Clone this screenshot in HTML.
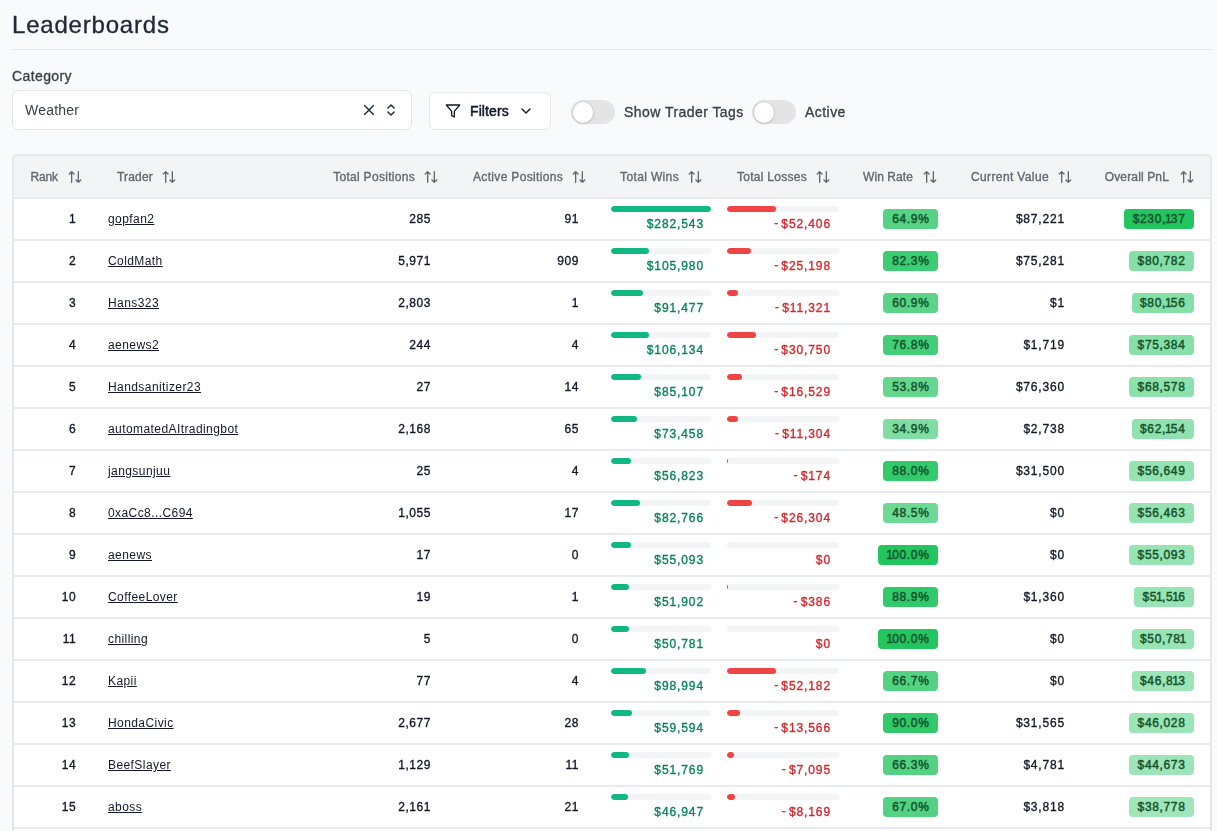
<!DOCTYPE html>
<html><head><meta charset="utf-8"><title>Leaderboards</title>
<style>
html,body{margin:0;padding:0;width:1217px;height:831px;overflow:hidden;background:#f9fafb;font-family:"Liberation Sans",sans-serif;}
.t{position:absolute;white-space:nowrap;will-change:transform;}
.a{position:absolute;box-sizing:border-box;}
svg{position:absolute;overflow:visible;}
.bd{position:absolute;height:20px;border-radius:4px;font-size:12px;line-height:20px;color:#14532d;white-space:nowrap;box-sizing:border-box;text-align:center;-webkit-text-stroke:0.4px #14532d;}
</style></head><body>
<div class="t" style="left:11.50px;top:7.58px;font-size:24px;line-height:34px;color:#1f2937;letter-spacing:0.8px;-webkit-text-stroke:0.35px #1f2937;">Leaderboards</div>
<div class="a" style="left:12px;top:49px;width:1200px;height:1px;background:#e4e5e9"></div>
<div class="t" style="left:12.30px;top:66.35px;font-size:14px;line-height:20px;-webkit-text-stroke:0.33px #3a3f47;color:#3a3f47;letter-spacing:0.4px;">Category</div>
<div class="a" style="left:12px;top:90px;width:400px;height:40px;background:#fff;border:1px solid #e5e7eb;border-radius:6px"></div>
<div class="t" style="left:25.30px;top:100.15px;font-size:14px;line-height:20px;color:#3a3f47;letter-spacing:0.2px;">Weather</div>
<svg style="left:364px;top:105px" width="10" height="10" viewBox="0 0 10 10"><path d="M0.6 0.6L9.4 9.4M9.4 0.6L0.6 9.4" stroke="#1f2937" stroke-width="1.4" fill="none" stroke-linecap="round"/></svg>
<svg style="left:387px;top:104px" width="8" height="12" viewBox="0 0 8 12"><path d="M0.9 4L4 0.9L7.1 4M0.9 8L4 11.1L7.1 8" stroke="#1f2937" stroke-width="1.4" fill="none" stroke-linecap="round" stroke-linejoin="round"/></svg>
<div class="a" style="left:429px;top:92px;width:122px;height:38px;background:#fff;border:1px solid #e5e7eb;border-radius:6px"></div>
<svg style="left:445px;top:103px" width="16" height="16" viewBox="0 0 24 24"><path d="M22 3H2l8 9.46V19l4 2v-8.54L22 3z" stroke="#111827" stroke-width="1.9" fill="none" stroke-linecap="round" stroke-linejoin="round"/></svg>
<div class="t" style="left:469.50px;top:101.35px;font-size:14px;line-height:20px;-webkit-text-stroke:0.5px #111827;color:#111827;letter-spacing:0.1px;">Filters</div>
<svg style="left:518px;top:103px" width="16" height="16" viewBox="0 0 24 24"><path d="m6 9 6 6 6-6" stroke="#111827" stroke-width="2" fill="none" stroke-linecap="round" stroke-linejoin="round"/></svg>
<div class="a" style="left:571px;top:100px;width:44px;height:24px;border-radius:12px;background:#e4e4e7"></div>
<div class="a" style="left:572.5px;top:102px;width:20.5px;height:20.5px;border-radius:50%;background:#fff;box-shadow:0 0 0 0.6px rgba(0,0,0,0.08),0 1px 3px rgba(0,0,0,0.15)"></div>
<div class="t" style="left:623.50px;top:102.15px;font-size:14px;line-height:20px;-webkit-text-stroke:0.33px #3a3f47;color:#3a3f47;letter-spacing:0.45px;">Show Trader Tags</div>
<div class="a" style="left:752px;top:100px;width:44px;height:24px;border-radius:12px;background:#e4e4e7"></div>
<div class="a" style="left:753.5px;top:102px;width:20.5px;height:20.5px;border-radius:50%;background:#fff;box-shadow:0 0 0 0.6px rgba(0,0,0,0.08),0 1px 3px rgba(0,0,0,0.15)"></div>
<div class="t" style="left:804.50px;top:102.15px;font-size:14px;line-height:20px;-webkit-text-stroke:0.33px #3a3f47;color:#3a3f47;letter-spacing:0.45px;">Active</div>
<div class="a" style="left:12px;top:154px;width:1200px;height:700px;background:#fff;border:2px solid #e6e7ea;border-radius:5px;overflow:hidden">
<div class="a" style="left:0;top:0;width:1196px;height:43px;background:#f3f4f6;border-bottom:2px solid #e9eaec"></div>
<div class="a" style="left:0;top:83px;width:1196px;height:2px;background:#e9eaec"></div>
<div class="a" style="left:0;top:125px;width:1196px;height:2px;background:#e9eaec"></div>
<div class="a" style="left:0;top:167px;width:1196px;height:2px;background:#e9eaec"></div>
<div class="a" style="left:0;top:209px;width:1196px;height:2px;background:#e9eaec"></div>
<div class="a" style="left:0;top:251px;width:1196px;height:2px;background:#e9eaec"></div>
<div class="a" style="left:0;top:293px;width:1196px;height:2px;background:#e9eaec"></div>
<div class="a" style="left:0;top:335px;width:1196px;height:2px;background:#e9eaec"></div>
<div class="a" style="left:0;top:377px;width:1196px;height:2px;background:#e9eaec"></div>
<div class="a" style="left:0;top:419px;width:1196px;height:2px;background:#e9eaec"></div>
<div class="a" style="left:0;top:461px;width:1196px;height:2px;background:#e9eaec"></div>
<div class="a" style="left:0;top:503px;width:1196px;height:2px;background:#e9eaec"></div>
<div class="a" style="left:0;top:545px;width:1196px;height:2px;background:#e9eaec"></div>
<div class="a" style="left:0;top:587px;width:1196px;height:2px;background:#e9eaec"></div>
<div class="a" style="left:0;top:629px;width:1196px;height:2px;background:#e9eaec"></div>
<div class="a" style="left:0;top:671px;width:1196px;height:2px;background:#e9eaec"></div>
</div>
<svg style="left:67px;top:169px" width="16" height="16" viewBox="0 0 24 24"><path d="m20.6 16.4-3.6 3.6-3.6-3.6M17 20V4M3.4 7.6 7 4l3.6 3.6M7 4v16" stroke="#62676f" stroke-width="2" fill="none" stroke-linecap="round" stroke-linejoin="round"/></svg>
<div class="t" style="left:-141.70px;width:200px;text-align:right;top:169.14px;font-size:12px;line-height:17px;-webkit-text-stroke:0.35px #62676f;color:#62676f;letter-spacing:-0.1px;">Rank</div>
<svg style="left:161px;top:169px" width="16" height="16" viewBox="0 0 24 24"><path d="m20.6 16.4-3.6 3.6-3.6-3.6M17 20V4M3.4 7.6 7 4l3.6 3.6M7 4v16" stroke="#62676f" stroke-width="2" fill="none" stroke-linecap="round" stroke-linejoin="round"/></svg>
<div class="t" style="left:-47.40px;width:200px;text-align:right;top:169.14px;font-size:12px;line-height:17px;-webkit-text-stroke:0.35px #62676f;color:#62676f;letter-spacing:0.2px;">Trader</div>
<svg style="left:423px;top:169px" width="16" height="16" viewBox="0 0 24 24"><path d="m20.6 16.4-3.6 3.6-3.6-3.6M17 20V4M3.4 7.6 7 4l3.6 3.6M7 4v16" stroke="#62676f" stroke-width="2" fill="none" stroke-linecap="round" stroke-linejoin="round"/></svg>
<div class="t" style="left:214.70px;width:200px;text-align:right;top:169.14px;font-size:12px;line-height:17px;-webkit-text-stroke:0.35px #62676f;color:#62676f;letter-spacing:0.3px;">Total Positions</div>
<svg style="left:571px;top:169px" width="16" height="16" viewBox="0 0 24 24"><path d="m20.6 16.4-3.6 3.6-3.6-3.6M17 20V4M3.4 7.6 7 4l3.6 3.6M7 4v16" stroke="#62676f" stroke-width="2" fill="none" stroke-linecap="round" stroke-linejoin="round"/></svg>
<div class="t" style="left:362.73px;width:200px;text-align:right;top:169.14px;font-size:12px;line-height:17px;-webkit-text-stroke:0.35px #62676f;color:#62676f;letter-spacing:0.33px;">Active Positions</div>
<svg style="left:687px;top:169px" width="16" height="16" viewBox="0 0 24 24"><path d="m20.6 16.4-3.6 3.6-3.6-3.6M17 20V4M3.4 7.6 7 4l3.6 3.6M7 4v16" stroke="#62676f" stroke-width="2" fill="none" stroke-linecap="round" stroke-linejoin="round"/></svg>
<div class="t" style="left:478.76px;width:200px;text-align:right;top:169.14px;font-size:12px;line-height:17px;-webkit-text-stroke:0.35px #62676f;color:#62676f;letter-spacing:0.36px;">Total Wins</div>
<svg style="left:815px;top:169px" width="16" height="16" viewBox="0 0 24 24"><path d="m20.6 16.4-3.6 3.6-3.6-3.6M17 20V4M3.4 7.6 7 4l3.6 3.6M7 4v16" stroke="#62676f" stroke-width="2" fill="none" stroke-linecap="round" stroke-linejoin="round"/></svg>
<div class="t" style="left:606.67px;width:200px;text-align:right;top:169.14px;font-size:12px;line-height:17px;-webkit-text-stroke:0.35px #62676f;color:#62676f;letter-spacing:0.27px;">Total Losses</div>
<svg style="left:922px;top:169px" width="16" height="16" viewBox="0 0 24 24"><path d="m20.6 16.4-3.6 3.6-3.6-3.6M17 20V4M3.4 7.6 7 4l3.6 3.6M7 4v16" stroke="#62676f" stroke-width="2" fill="none" stroke-linecap="round" stroke-linejoin="round"/></svg>
<div class="t" style="left:713.48px;width:200px;text-align:right;top:169.14px;font-size:12px;line-height:17px;-webkit-text-stroke:0.35px #62676f;color:#62676f;letter-spacing:0.08px;">Win Rate</div>
<svg style="left:1057px;top:169px" width="16" height="16" viewBox="0 0 24 24"><path d="m20.6 16.4-3.6 3.6-3.6-3.6M17 20V4M3.4 7.6 7 4l3.6 3.6M7 4v16" stroke="#62676f" stroke-width="2" fill="none" stroke-linecap="round" stroke-linejoin="round"/></svg>
<div class="t" style="left:848.77px;width:200px;text-align:right;top:169.14px;font-size:12px;line-height:17px;-webkit-text-stroke:0.35px #62676f;color:#62676f;letter-spacing:0.37px;">Current Value</div>
<svg style="left:1179px;top:169px" width="16" height="16" viewBox="0 0 24 24"><path d="m20.6 16.4-3.6 3.6-3.6-3.6M17 20V4M3.4 7.6 7 4l3.6 3.6M7 4v16" stroke="#62676f" stroke-width="2" fill="none" stroke-linecap="round" stroke-linejoin="round"/></svg>
<div class="t" style="left:969.14px;width:200px;text-align:right;top:169.14px;font-size:12px;line-height:17px;-webkit-text-stroke:0.35px #62676f;color:#62676f;letter-spacing:0.14px;">Overall PnL</div>
<div class="t" style="left:35.80px;width:40px;text-align:right;top:211.14px;font-size:12px;line-height:17px;-webkit-text-stroke:0.33px #111827;color:#111827;letter-spacing:0.4px;">1</div>
<div class="t" style="left:107.60px;top:211.14px;font-size:12px;line-height:17px;color:#111827;letter-spacing:0.42px;text-decoration:underline;text-underline-offset:0.6px;">gopfan2</div>
<div class="t" style="left:351.00px;width:80px;text-align:right;top:211.14px;font-size:12px;line-height:17px;-webkit-text-stroke:0.33px #111827;color:#111827;letter-spacing:0.55px;">285</div>
<div class="t" style="left:498.50px;width:80px;text-align:right;top:211.14px;font-size:12px;line-height:17px;-webkit-text-stroke:0.33px #111827;color:#111827;letter-spacing:0.55px;">91</div>
<div class="a" style="left:611px;top:206px;width:100px;height:6px;border-radius:3px;background:#f3f4f6;overflow:hidden"><div class="a" style="left:0;top:0;width:100.00px;height:6px;border-radius:3px;background:#10b981"></div></div>
<div class="t" style="left:603.50px;width:100px;text-align:right;top:215.54px;font-size:12px;line-height:17px;-webkit-text-stroke:0.33px #08825b;color:#08825b;letter-spacing:0.9px;">$282,543</div>
<div class="a" style="left:727px;top:206px;width:111.5px;height:6px;border-radius:3px;background:#f3f4f6;overflow:hidden"><div class="a" style="left:0;top:0;width:49.10px;height:6px;border-radius:3px;background:#ef4444;"></div></div>
<div class="t" style="left:731.00px;width:100px;text-align:right;top:215.54px;font-size:12px;line-height:17px;-webkit-text-stroke:0.33px #d3262e;color:#d3262e;letter-spacing:0.9px;"><span style="position:relative;top:-0.8px">-</span><span style="margin-left:2.2px">$52,406</span></div>
<div class="a" style="left:868px;top:209px;width:70px;height:20px;display:flex;justify-content:flex-end"><div style="position:relative;height:20px;border-radius:4px;background:rgba(34,197,94,0.768);padding:0 8.5px 0 9.5px;font-size:12px;line-height:20.5px;-webkit-text-stroke:0.45px #14532d;color:#14532d;letter-spacing:0.65px;white-space:nowrap">64.9%</div></div>
<div class="t" style="left:964.90px;width:100px;text-align:right;top:211.14px;font-size:12px;line-height:17px;-webkit-text-stroke:0.33px #111827;color:#111827;letter-spacing:0.82px;">$87,221</div>
<div class="a" style="left:1094px;top:209px;width:100px;height:20px;display:flex;justify-content:flex-end"><div style="position:relative;height:20px;border-radius:4px;background:rgba(34,197,94,1.000);padding:0 8.5px 0 8.5px;font-size:12px;line-height:20.5px;-webkit-text-stroke:0.45px #14532d;color:#14532d;letter-spacing:0.65px;white-space:nowrap">$230,<span style="margin-left:-1.1px;letter-spacing:-0.75px">1</span>37</div></div>
<div class="t" style="left:35.80px;width:40px;text-align:right;top:253.14px;font-size:12px;line-height:17px;-webkit-text-stroke:0.33px #111827;color:#111827;letter-spacing:0.4px;">2</div>
<div class="t" style="left:107.60px;top:253.14px;font-size:12px;line-height:17px;color:#111827;letter-spacing:0.42px;text-decoration:underline;text-underline-offset:0.6px;">ColdMath</div>
<div class="t" style="left:351.00px;width:80px;text-align:right;top:253.14px;font-size:12px;line-height:17px;-webkit-text-stroke:0.33px #111827;color:#111827;letter-spacing:0.55px;">5,971</div>
<div class="t" style="left:498.50px;width:80px;text-align:right;top:253.14px;font-size:12px;line-height:17px;-webkit-text-stroke:0.33px #111827;color:#111827;letter-spacing:0.55px;">909</div>
<div class="a" style="left:611px;top:248px;width:100px;height:6px;border-radius:3px;background:#f3f4f6;overflow:hidden"><div class="a" style="left:0;top:0;width:37.51px;height:6px;border-radius:3px;background:#10b981"></div></div>
<div class="t" style="left:603.50px;width:100px;text-align:right;top:257.54px;font-size:12px;line-height:17px;-webkit-text-stroke:0.33px #08825b;color:#08825b;letter-spacing:0.9px;">$105,980</div>
<div class="a" style="left:727px;top:248px;width:111.5px;height:6px;border-radius:3px;background:#f3f4f6;overflow:hidden"><div class="a" style="left:0;top:0;width:23.61px;height:6px;border-radius:3px;background:#ef4444;"></div></div>
<div class="t" style="left:731.00px;width:100px;text-align:right;top:257.54px;font-size:12px;line-height:17px;-webkit-text-stroke:0.33px #d3262e;color:#d3262e;letter-spacing:0.9px;"><span style="position:relative;top:-0.8px">-</span><span style="margin-left:2.2px">$25,198</span></div>
<div class="a" style="left:868px;top:251px;width:70px;height:20px;display:flex;justify-content:flex-end"><div style="position:relative;height:20px;border-radius:4px;background:rgba(34,197,94,0.883);padding:0 8.5px 0 9.5px;font-size:12px;line-height:20.5px;-webkit-text-stroke:0.45px #14532d;color:#14532d;letter-spacing:0.65px;white-space:nowrap">82.3%</div></div>
<div class="t" style="left:964.90px;width:100px;text-align:right;top:253.14px;font-size:12px;line-height:17px;-webkit-text-stroke:0.33px #111827;color:#111827;letter-spacing:0.82px;">$75,281</div>
<div class="a" style="left:1094px;top:251px;width:100px;height:20px;display:flex;justify-content:flex-end"><div style="position:relative;height:20px;border-radius:4px;background:rgba(34,197,94,0.552);padding:0 8.5px 0 8.5px;font-size:12px;line-height:20.5px;-webkit-text-stroke:0.45px #14532d;color:#14532d;letter-spacing:0.65px;white-space:nowrap">$80,782</div></div>
<div class="t" style="left:35.80px;width:40px;text-align:right;top:295.14px;font-size:12px;line-height:17px;-webkit-text-stroke:0.33px #111827;color:#111827;letter-spacing:0.4px;">3</div>
<div class="t" style="left:107.60px;top:295.14px;font-size:12px;line-height:17px;color:#111827;letter-spacing:0.42px;text-decoration:underline;text-underline-offset:0.6px;">Hans323</div>
<div class="t" style="left:351.00px;width:80px;text-align:right;top:295.14px;font-size:12px;line-height:17px;-webkit-text-stroke:0.33px #111827;color:#111827;letter-spacing:0.55px;">2,803</div>
<div class="t" style="left:498.50px;width:80px;text-align:right;top:295.14px;font-size:12px;line-height:17px;-webkit-text-stroke:0.33px #111827;color:#111827;letter-spacing:0.55px;">1</div>
<div class="a" style="left:611px;top:290px;width:100px;height:6px;border-radius:3px;background:#f3f4f6;overflow:hidden"><div class="a" style="left:0;top:0;width:32.38px;height:6px;border-radius:3px;background:#10b981"></div></div>
<div class="t" style="left:603.50px;width:100px;text-align:right;top:299.54px;font-size:12px;line-height:17px;-webkit-text-stroke:0.33px #08825b;color:#08825b;letter-spacing:0.9px;">$91,477</div>
<div class="a" style="left:727px;top:290px;width:111.5px;height:6px;border-radius:3px;background:#f3f4f6;overflow:hidden"><div class="a" style="left:0;top:0;width:10.61px;height:6px;border-radius:3px;background:#ef4444;"></div></div>
<div class="t" style="left:731.00px;width:100px;text-align:right;top:299.54px;font-size:12px;line-height:17px;-webkit-text-stroke:0.33px #d3262e;color:#d3262e;letter-spacing:0.9px;"><span style="position:relative;top:-0.8px">-</span><span style="margin-left:2.2px">$11,321</span></div>
<div class="a" style="left:868px;top:293px;width:70px;height:20px;display:flex;justify-content:flex-end"><div style="position:relative;height:20px;border-radius:4px;background:rgba(34,197,94,0.742);padding:0 8.5px 0 9.5px;font-size:12px;line-height:20.5px;-webkit-text-stroke:0.45px #14532d;color:#14532d;letter-spacing:0.65px;white-space:nowrap">60.9%</div></div>
<div class="t" style="left:964.90px;width:100px;text-align:right;top:295.14px;font-size:12px;line-height:17px;-webkit-text-stroke:0.33px #111827;color:#111827;letter-spacing:0.82px;">$1</div>
<div class="a" style="left:1094px;top:293px;width:100px;height:20px;display:flex;justify-content:flex-end"><div style="position:relative;height:20px;border-radius:4px;background:rgba(34,197,94,0.550);padding:0 8.5px 0 8.5px;font-size:12px;line-height:20.5px;-webkit-text-stroke:0.45px #14532d;color:#14532d;letter-spacing:0.65px;white-space:nowrap">$80,<span style="margin-left:-1.1px;letter-spacing:-0.75px">1</span>56</div></div>
<div class="t" style="left:35.80px;width:40px;text-align:right;top:337.14px;font-size:12px;line-height:17px;-webkit-text-stroke:0.33px #111827;color:#111827;letter-spacing:0.4px;">4</div>
<div class="t" style="left:107.60px;top:337.14px;font-size:12px;line-height:17px;color:#111827;letter-spacing:0.42px;text-decoration:underline;text-underline-offset:0.6px;">aenews2</div>
<div class="t" style="left:351.00px;width:80px;text-align:right;top:337.14px;font-size:12px;line-height:17px;-webkit-text-stroke:0.33px #111827;color:#111827;letter-spacing:0.55px;">244</div>
<div class="t" style="left:498.50px;width:80px;text-align:right;top:337.14px;font-size:12px;line-height:17px;-webkit-text-stroke:0.33px #111827;color:#111827;letter-spacing:0.55px;">4</div>
<div class="a" style="left:611px;top:332px;width:100px;height:6px;border-radius:3px;background:#f3f4f6;overflow:hidden"><div class="a" style="left:0;top:0;width:37.56px;height:6px;border-radius:3px;background:#10b981"></div></div>
<div class="t" style="left:603.50px;width:100px;text-align:right;top:341.54px;font-size:12px;line-height:17px;-webkit-text-stroke:0.33px #08825b;color:#08825b;letter-spacing:0.9px;">$106,134</div>
<div class="a" style="left:727px;top:332px;width:111.5px;height:6px;border-radius:3px;background:#f3f4f6;overflow:hidden"><div class="a" style="left:0;top:0;width:28.81px;height:6px;border-radius:3px;background:#ef4444;"></div></div>
<div class="t" style="left:731.00px;width:100px;text-align:right;top:341.54px;font-size:12px;line-height:17px;-webkit-text-stroke:0.33px #d3262e;color:#d3262e;letter-spacing:0.9px;"><span style="position:relative;top:-0.8px">-</span><span style="margin-left:2.2px">$30,750</span></div>
<div class="a" style="left:868px;top:335px;width:70px;height:20px;display:flex;justify-content:flex-end"><div style="position:relative;height:20px;border-radius:4px;background:rgba(34,197,94,0.847);padding:0 8.5px 0 9.5px;font-size:12px;line-height:20.5px;-webkit-text-stroke:0.45px #14532d;color:#14532d;letter-spacing:0.65px;white-space:nowrap">76.8%</div></div>
<div class="t" style="left:964.90px;width:100px;text-align:right;top:337.14px;font-size:12px;line-height:17px;-webkit-text-stroke:0.33px #111827;color:#111827;letter-spacing:0.82px;">$1,719</div>
<div class="a" style="left:1094px;top:335px;width:100px;height:20px;display:flex;justify-content:flex-end"><div style="position:relative;height:20px;border-radius:4px;background:rgba(34,197,94,0.536);padding:0 8.5px 0 8.5px;font-size:12px;line-height:20.5px;-webkit-text-stroke:0.45px #14532d;color:#14532d;letter-spacing:0.65px;white-space:nowrap">$75,384</div></div>
<div class="t" style="left:35.80px;width:40px;text-align:right;top:379.14px;font-size:12px;line-height:17px;-webkit-text-stroke:0.33px #111827;color:#111827;letter-spacing:0.4px;">5</div>
<div class="t" style="left:107.60px;top:379.14px;font-size:12px;line-height:17px;color:#111827;letter-spacing:0.42px;text-decoration:underline;text-underline-offset:0.6px;">Handsanitizer23</div>
<div class="t" style="left:351.00px;width:80px;text-align:right;top:379.14px;font-size:12px;line-height:17px;-webkit-text-stroke:0.33px #111827;color:#111827;letter-spacing:0.55px;">27</div>
<div class="t" style="left:498.50px;width:80px;text-align:right;top:379.14px;font-size:12px;line-height:17px;-webkit-text-stroke:0.33px #111827;color:#111827;letter-spacing:0.55px;">14</div>
<div class="a" style="left:611px;top:374px;width:100px;height:6px;border-radius:3px;background:#f3f4f6;overflow:hidden"><div class="a" style="left:0;top:0;width:30.12px;height:6px;border-radius:3px;background:#10b981"></div></div>
<div class="t" style="left:603.50px;width:100px;text-align:right;top:383.54px;font-size:12px;line-height:17px;-webkit-text-stroke:0.33px #08825b;color:#08825b;letter-spacing:0.9px;">$85,107</div>
<div class="a" style="left:727px;top:374px;width:111.5px;height:6px;border-radius:3px;background:#f3f4f6;overflow:hidden"><div class="a" style="left:0;top:0;width:15.49px;height:6px;border-radius:3px;background:#ef4444;"></div></div>
<div class="t" style="left:731.00px;width:100px;text-align:right;top:383.54px;font-size:12px;line-height:17px;-webkit-text-stroke:0.33px #d3262e;color:#d3262e;letter-spacing:0.9px;"><span style="position:relative;top:-0.8px">-</span><span style="margin-left:2.2px">$16,529</span></div>
<div class="a" style="left:868px;top:377px;width:70px;height:20px;display:flex;justify-content:flex-end"><div style="position:relative;height:20px;border-radius:4px;background:rgba(34,197,94,0.695);padding:0 8.5px 0 9.5px;font-size:12px;line-height:20.5px;-webkit-text-stroke:0.45px #14532d;color:#14532d;letter-spacing:0.65px;white-space:nowrap">53.8%</div></div>
<div class="t" style="left:964.90px;width:100px;text-align:right;top:379.14px;font-size:12px;line-height:17px;-webkit-text-stroke:0.33px #111827;color:#111827;letter-spacing:0.82px;">$76,360</div>
<div class="a" style="left:1094px;top:377px;width:100px;height:20px;display:flex;justify-content:flex-end"><div style="position:relative;height:20px;border-radius:4px;background:rgba(34,197,94,0.516);padding:0 8.5px 0 8.5px;font-size:12px;line-height:20.5px;-webkit-text-stroke:0.45px #14532d;color:#14532d;letter-spacing:0.65px;white-space:nowrap">$68,578</div></div>
<div class="t" style="left:35.80px;width:40px;text-align:right;top:421.14px;font-size:12px;line-height:17px;-webkit-text-stroke:0.33px #111827;color:#111827;letter-spacing:0.4px;">6</div>
<div class="t" style="left:107.60px;top:421.14px;font-size:12px;line-height:17px;color:#111827;letter-spacing:0.42px;text-decoration:underline;text-underline-offset:0.6px;">automatedAItradingbot</div>
<div class="t" style="left:351.00px;width:80px;text-align:right;top:421.14px;font-size:12px;line-height:17px;-webkit-text-stroke:0.33px #111827;color:#111827;letter-spacing:0.55px;">2,168</div>
<div class="t" style="left:498.50px;width:80px;text-align:right;top:421.14px;font-size:12px;line-height:17px;-webkit-text-stroke:0.33px #111827;color:#111827;letter-spacing:0.55px;">65</div>
<div class="a" style="left:611px;top:416px;width:100px;height:6px;border-radius:3px;background:#f3f4f6;overflow:hidden"><div class="a" style="left:0;top:0;width:26.00px;height:6px;border-radius:3px;background:#10b981"></div></div>
<div class="t" style="left:603.50px;width:100px;text-align:right;top:425.54px;font-size:12px;line-height:17px;-webkit-text-stroke:0.33px #08825b;color:#08825b;letter-spacing:0.9px;">$73,458</div>
<div class="a" style="left:727px;top:416px;width:111.5px;height:6px;border-radius:3px;background:#f3f4f6;overflow:hidden"><div class="a" style="left:0;top:0;width:10.59px;height:6px;border-radius:3px;background:#ef4444;"></div></div>
<div class="t" style="left:731.00px;width:100px;text-align:right;top:425.54px;font-size:12px;line-height:17px;-webkit-text-stroke:0.33px #d3262e;color:#d3262e;letter-spacing:0.9px;"><span style="position:relative;top:-0.8px">-</span><span style="margin-left:2.2px">$11,304</span></div>
<div class="a" style="left:868px;top:419px;width:70px;height:20px;display:flex;justify-content:flex-end"><div style="position:relative;height:20px;border-radius:4px;background:rgba(34,197,94,0.570);padding:0 8.5px 0 9.5px;font-size:12px;line-height:20.5px;-webkit-text-stroke:0.45px #14532d;color:#14532d;letter-spacing:0.65px;white-space:nowrap">34.9%</div></div>
<div class="t" style="left:964.90px;width:100px;text-align:right;top:421.14px;font-size:12px;line-height:17px;-webkit-text-stroke:0.33px #111827;color:#111827;letter-spacing:0.82px;">$2,738</div>
<div class="a" style="left:1094px;top:419px;width:100px;height:20px;display:flex;justify-content:flex-end"><div style="position:relative;height:20px;border-radius:4px;background:rgba(34,197,94,0.496);padding:0 8.5px 0 8.5px;font-size:12px;line-height:20.5px;-webkit-text-stroke:0.45px #14532d;color:#14532d;letter-spacing:0.65px;white-space:nowrap">$62,<span style="margin-left:-1.1px;letter-spacing:-0.75px">1</span>54</div></div>
<div class="t" style="left:35.80px;width:40px;text-align:right;top:463.14px;font-size:12px;line-height:17px;-webkit-text-stroke:0.33px #111827;color:#111827;letter-spacing:0.4px;">7</div>
<div class="t" style="left:107.60px;top:463.14px;font-size:12px;line-height:17px;color:#111827;letter-spacing:0.42px;text-decoration:underline;text-underline-offset:0.6px;">jangsunjuu</div>
<div class="t" style="left:351.00px;width:80px;text-align:right;top:463.14px;font-size:12px;line-height:17px;-webkit-text-stroke:0.33px #111827;color:#111827;letter-spacing:0.55px;">25</div>
<div class="t" style="left:498.50px;width:80px;text-align:right;top:463.14px;font-size:12px;line-height:17px;-webkit-text-stroke:0.33px #111827;color:#111827;letter-spacing:0.55px;">4</div>
<div class="a" style="left:611px;top:458px;width:100px;height:6px;border-radius:3px;background:#f3f4f6;overflow:hidden"><div class="a" style="left:0;top:0;width:20.11px;height:6px;border-radius:3px;background:#10b981"></div></div>
<div class="t" style="left:603.50px;width:100px;text-align:right;top:467.54px;font-size:12px;line-height:17px;-webkit-text-stroke:0.33px #08825b;color:#08825b;letter-spacing:0.9px;">$56,823</div>
<div class="a" style="left:727px;top:458px;width:111.5px;height:6px;border-radius:3px;background:#f3f4f6;overflow:hidden"><div class="a" style="left:0;top:0;width:1.20px;height:6px;border-radius:3px;background:#ef4444;"></div></div>
<div class="t" style="left:731.00px;width:100px;text-align:right;top:467.54px;font-size:12px;line-height:17px;-webkit-text-stroke:0.33px #d3262e;color:#d3262e;letter-spacing:0.9px;"><span style="position:relative;top:-0.8px">-</span><span style="margin-left:2.2px">$174</span></div>
<div class="a" style="left:868px;top:461px;width:70px;height:20px;display:flex;justify-content:flex-end"><div style="position:relative;height:20px;border-radius:4px;background:rgba(34,197,94,0.921);padding:0 8.5px 0 9.5px;font-size:12px;line-height:20.5px;-webkit-text-stroke:0.45px #14532d;color:#14532d;letter-spacing:0.65px;white-space:nowrap">88.0%</div></div>
<div class="t" style="left:964.90px;width:100px;text-align:right;top:463.14px;font-size:12px;line-height:17px;-webkit-text-stroke:0.33px #111827;color:#111827;letter-spacing:0.82px;">$31,500</div>
<div class="a" style="left:1094px;top:461px;width:100px;height:20px;display:flex;justify-content:flex-end"><div style="position:relative;height:20px;border-radius:4px;background:rgba(34,197,94,0.480);padding:0 8.5px 0 8.5px;font-size:12px;line-height:20.5px;-webkit-text-stroke:0.45px #14532d;color:#14532d;letter-spacing:0.65px;white-space:nowrap">$56,649</div></div>
<div class="t" style="left:35.80px;width:40px;text-align:right;top:505.14px;font-size:12px;line-height:17px;-webkit-text-stroke:0.33px #111827;color:#111827;letter-spacing:0.4px;">8</div>
<div class="t" style="left:107.60px;top:505.14px;font-size:12px;line-height:17px;color:#111827;letter-spacing:0.42px;text-decoration:underline;text-underline-offset:0.6px;">0xaCc8...C694</div>
<div class="t" style="left:351.00px;width:80px;text-align:right;top:505.14px;font-size:12px;line-height:17px;-webkit-text-stroke:0.33px #111827;color:#111827;letter-spacing:0.55px;">1,055</div>
<div class="t" style="left:498.50px;width:80px;text-align:right;top:505.14px;font-size:12px;line-height:17px;-webkit-text-stroke:0.33px #111827;color:#111827;letter-spacing:0.55px;">17</div>
<div class="a" style="left:611px;top:500px;width:100px;height:6px;border-radius:3px;background:#f3f4f6;overflow:hidden"><div class="a" style="left:0;top:0;width:29.29px;height:6px;border-radius:3px;background:#10b981"></div></div>
<div class="t" style="left:603.50px;width:100px;text-align:right;top:509.54px;font-size:12px;line-height:17px;-webkit-text-stroke:0.33px #08825b;color:#08825b;letter-spacing:0.9px;">$82,766</div>
<div class="a" style="left:727px;top:500px;width:111.5px;height:6px;border-radius:3px;background:#f3f4f6;overflow:hidden"><div class="a" style="left:0;top:0;width:24.65px;height:6px;border-radius:3px;background:#ef4444;"></div></div>
<div class="t" style="left:731.00px;width:100px;text-align:right;top:509.54px;font-size:12px;line-height:17px;-webkit-text-stroke:0.33px #d3262e;color:#d3262e;letter-spacing:0.9px;"><span style="position:relative;top:-0.8px">-</span><span style="margin-left:2.2px">$26,304</span></div>
<div class="a" style="left:868px;top:503px;width:70px;height:20px;display:flex;justify-content:flex-end"><div style="position:relative;height:20px;border-radius:4px;background:rgba(34,197,94,0.660);padding:0 8.5px 0 9.5px;font-size:12px;line-height:20.5px;-webkit-text-stroke:0.45px #14532d;color:#14532d;letter-spacing:0.65px;white-space:nowrap">48.5%</div></div>
<div class="t" style="left:964.90px;width:100px;text-align:right;top:505.14px;font-size:12px;line-height:17px;-webkit-text-stroke:0.33px #111827;color:#111827;letter-spacing:0.82px;">$0</div>
<div class="a" style="left:1094px;top:503px;width:100px;height:20px;display:flex;justify-content:flex-end"><div style="position:relative;height:20px;border-radius:4px;background:rgba(34,197,94,0.479);padding:0 8.5px 0 8.5px;font-size:12px;line-height:20.5px;-webkit-text-stroke:0.45px #14532d;color:#14532d;letter-spacing:0.65px;white-space:nowrap">$56,463</div></div>
<div class="t" style="left:35.80px;width:40px;text-align:right;top:547.14px;font-size:12px;line-height:17px;-webkit-text-stroke:0.33px #111827;color:#111827;letter-spacing:0.4px;">9</div>
<div class="t" style="left:107.60px;top:547.14px;font-size:12px;line-height:17px;color:#111827;letter-spacing:0.42px;text-decoration:underline;text-underline-offset:0.6px;">aenews</div>
<div class="t" style="left:351.00px;width:80px;text-align:right;top:547.14px;font-size:12px;line-height:17px;-webkit-text-stroke:0.33px #111827;color:#111827;letter-spacing:0.55px;">17</div>
<div class="t" style="left:498.50px;width:80px;text-align:right;top:547.14px;font-size:12px;line-height:17px;-webkit-text-stroke:0.33px #111827;color:#111827;letter-spacing:0.55px;">0</div>
<div class="a" style="left:611px;top:542px;width:100px;height:6px;border-radius:3px;background:#f3f4f6;overflow:hidden"><div class="a" style="left:0;top:0;width:19.50px;height:6px;border-radius:3px;background:#10b981"></div></div>
<div class="t" style="left:603.50px;width:100px;text-align:right;top:551.54px;font-size:12px;line-height:17px;-webkit-text-stroke:0.33px #08825b;color:#08825b;letter-spacing:0.9px;">$55,093</div>
<div class="a" style="left:727px;top:542px;width:111.5px;height:6px;border-radius:3px;background:#f3f4f6;overflow:hidden"><div class="a" style="left:0;top:0;width:1.20px;height:6px;border-radius:3px;background:#ef4444;display:none;"></div></div>
<div class="t" style="left:731.00px;width:100px;text-align:right;top:551.54px;font-size:12px;line-height:17px;-webkit-text-stroke:0.33px #d3262e;color:#d3262e;letter-spacing:0.9px;">$0</div>
<div class="a" style="left:868px;top:545px;width:70px;height:20px;display:flex;justify-content:flex-end"><div style="position:relative;height:20px;border-radius:4px;background:rgba(34,197,94,1.000);padding:0 8.5px 0 9.5px;font-size:12px;line-height:20.5px;-webkit-text-stroke:0.45px #14532d;color:#14532d;letter-spacing:0.65px;white-space:nowrap"><span style="margin-left:-1.1px;letter-spacing:-0.75px">1</span>00.0%</div></div>
<div class="t" style="left:964.90px;width:100px;text-align:right;top:547.14px;font-size:12px;line-height:17px;-webkit-text-stroke:0.33px #111827;color:#111827;letter-spacing:0.82px;">$0</div>
<div class="a" style="left:1094px;top:545px;width:100px;height:20px;display:flex;justify-content:flex-end"><div style="position:relative;height:20px;border-radius:4px;background:rgba(34,197,94,0.475);padding:0 8.5px 0 8.5px;font-size:12px;line-height:20.5px;-webkit-text-stroke:0.45px #14532d;color:#14532d;letter-spacing:0.65px;white-space:nowrap">$55,093</div></div>
<div class="t" style="left:35.80px;width:40px;text-align:right;top:589.14px;font-size:12px;line-height:17px;-webkit-text-stroke:0.33px #111827;color:#111827;letter-spacing:0.4px;">10</div>
<div class="t" style="left:107.60px;top:589.14px;font-size:12px;line-height:17px;color:#111827;letter-spacing:0.42px;text-decoration:underline;text-underline-offset:0.6px;">CoffeeLover</div>
<div class="t" style="left:351.00px;width:80px;text-align:right;top:589.14px;font-size:12px;line-height:17px;-webkit-text-stroke:0.33px #111827;color:#111827;letter-spacing:0.55px;">19</div>
<div class="t" style="left:498.50px;width:80px;text-align:right;top:589.14px;font-size:12px;line-height:17px;-webkit-text-stroke:0.33px #111827;color:#111827;letter-spacing:0.55px;">1</div>
<div class="a" style="left:611px;top:584px;width:100px;height:6px;border-radius:3px;background:#f3f4f6;overflow:hidden"><div class="a" style="left:0;top:0;width:18.37px;height:6px;border-radius:3px;background:#10b981"></div></div>
<div class="t" style="left:603.50px;width:100px;text-align:right;top:593.54px;font-size:12px;line-height:17px;-webkit-text-stroke:0.33px #08825b;color:#08825b;letter-spacing:0.9px;">$51,902</div>
<div class="a" style="left:727px;top:584px;width:111.5px;height:6px;border-radius:3px;background:#f3f4f6;overflow:hidden"><div class="a" style="left:0;top:0;width:1.20px;height:6px;border-radius:3px;background:#ef4444;"></div></div>
<div class="t" style="left:731.00px;width:100px;text-align:right;top:593.54px;font-size:12px;line-height:17px;-webkit-text-stroke:0.33px #d3262e;color:#d3262e;letter-spacing:0.9px;"><span style="position:relative;top:-0.8px">-</span><span style="margin-left:2.2px">$386</span></div>
<div class="a" style="left:868px;top:587px;width:70px;height:20px;display:flex;justify-content:flex-end"><div style="position:relative;height:20px;border-radius:4px;background:rgba(34,197,94,0.927);padding:0 8.5px 0 9.5px;font-size:12px;line-height:20.5px;-webkit-text-stroke:0.45px #14532d;color:#14532d;letter-spacing:0.65px;white-space:nowrap">88.9%</div></div>
<div class="t" style="left:964.90px;width:100px;text-align:right;top:589.14px;font-size:12px;line-height:17px;-webkit-text-stroke:0.33px #111827;color:#111827;letter-spacing:0.82px;">$1,360</div>
<div class="a" style="left:1094px;top:587px;width:100px;height:20px;display:flex;justify-content:flex-end"><div style="position:relative;height:20px;border-radius:4px;background:rgba(34,197,94,0.464);padding:0 8.5px 0 8.5px;font-size:12px;line-height:20.5px;-webkit-text-stroke:0.45px #14532d;color:#14532d;letter-spacing:0.65px;white-space:nowrap">$5<span style="margin-left:-1.1px;letter-spacing:-0.75px">1</span>,5<span style="margin-left:-1.1px;letter-spacing:-0.75px">1</span>6</div></div>
<div class="t" style="left:35.80px;width:40px;text-align:right;top:631.14px;font-size:12px;line-height:17px;-webkit-text-stroke:0.33px #111827;color:#111827;letter-spacing:0.4px;">11</div>
<div class="t" style="left:107.60px;top:631.14px;font-size:12px;line-height:17px;color:#111827;letter-spacing:0.42px;text-decoration:underline;text-underline-offset:0.6px;">chilling</div>
<div class="t" style="left:351.00px;width:80px;text-align:right;top:631.14px;font-size:12px;line-height:17px;-webkit-text-stroke:0.33px #111827;color:#111827;letter-spacing:0.55px;">5</div>
<div class="t" style="left:498.50px;width:80px;text-align:right;top:631.14px;font-size:12px;line-height:17px;-webkit-text-stroke:0.33px #111827;color:#111827;letter-spacing:0.55px;">0</div>
<div class="a" style="left:611px;top:626px;width:100px;height:6px;border-radius:3px;background:#f3f4f6;overflow:hidden"><div class="a" style="left:0;top:0;width:17.97px;height:6px;border-radius:3px;background:#10b981"></div></div>
<div class="t" style="left:603.50px;width:100px;text-align:right;top:635.54px;font-size:12px;line-height:17px;-webkit-text-stroke:0.33px #08825b;color:#08825b;letter-spacing:0.9px;">$50,781</div>
<div class="a" style="left:727px;top:626px;width:111.5px;height:6px;border-radius:3px;background:#f3f4f6;overflow:hidden"><div class="a" style="left:0;top:0;width:1.20px;height:6px;border-radius:3px;background:#ef4444;display:none;"></div></div>
<div class="t" style="left:731.00px;width:100px;text-align:right;top:635.54px;font-size:12px;line-height:17px;-webkit-text-stroke:0.33px #d3262e;color:#d3262e;letter-spacing:0.9px;">$0</div>
<div class="a" style="left:868px;top:629px;width:70px;height:20px;display:flex;justify-content:flex-end"><div style="position:relative;height:20px;border-radius:4px;background:rgba(34,197,94,1.000);padding:0 8.5px 0 9.5px;font-size:12px;line-height:20.5px;-webkit-text-stroke:0.45px #14532d;color:#14532d;letter-spacing:0.65px;white-space:nowrap"><span style="margin-left:-1.1px;letter-spacing:-0.75px">1</span>00.0%</div></div>
<div class="t" style="left:964.90px;width:100px;text-align:right;top:631.14px;font-size:12px;line-height:17px;-webkit-text-stroke:0.33px #111827;color:#111827;letter-spacing:0.82px;">$0</div>
<div class="a" style="left:1094px;top:629px;width:100px;height:20px;display:flex;justify-content:flex-end"><div style="position:relative;height:20px;border-radius:4px;background:rgba(34,197,94,0.462);padding:0 8.5px 0 8.5px;font-size:12px;line-height:20.5px;-webkit-text-stroke:0.45px #14532d;color:#14532d;letter-spacing:0.65px;white-space:nowrap">$50,78<span style="margin-left:-1.1px;letter-spacing:-0.75px">1</span></div></div>
<div class="t" style="left:35.80px;width:40px;text-align:right;top:673.14px;font-size:12px;line-height:17px;-webkit-text-stroke:0.33px #111827;color:#111827;letter-spacing:0.4px;">12</div>
<div class="t" style="left:107.60px;top:673.14px;font-size:12px;line-height:17px;color:#111827;letter-spacing:0.42px;text-decoration:underline;text-underline-offset:0.6px;">Kapii</div>
<div class="t" style="left:351.00px;width:80px;text-align:right;top:673.14px;font-size:12px;line-height:17px;-webkit-text-stroke:0.33px #111827;color:#111827;letter-spacing:0.55px;">77</div>
<div class="t" style="left:498.50px;width:80px;text-align:right;top:673.14px;font-size:12px;line-height:17px;-webkit-text-stroke:0.33px #111827;color:#111827;letter-spacing:0.55px;">4</div>
<div class="a" style="left:611px;top:668px;width:100px;height:6px;border-radius:3px;background:#f3f4f6;overflow:hidden"><div class="a" style="left:0;top:0;width:35.04px;height:6px;border-radius:3px;background:#10b981"></div></div>
<div class="t" style="left:603.50px;width:100px;text-align:right;top:677.54px;font-size:12px;line-height:17px;-webkit-text-stroke:0.33px #08825b;color:#08825b;letter-spacing:0.9px;">$98,994</div>
<div class="a" style="left:727px;top:668px;width:111.5px;height:6px;border-radius:3px;background:#f3f4f6;overflow:hidden"><div class="a" style="left:0;top:0;width:48.89px;height:6px;border-radius:3px;background:#ef4444;"></div></div>
<div class="t" style="left:731.00px;width:100px;text-align:right;top:677.54px;font-size:12px;line-height:17px;-webkit-text-stroke:0.33px #d3262e;color:#d3262e;letter-spacing:0.9px;"><span style="position:relative;top:-0.8px">-</span><span style="margin-left:2.2px">$52,182</span></div>
<div class="a" style="left:868px;top:671px;width:70px;height:20px;display:flex;justify-content:flex-end"><div style="position:relative;height:20px;border-radius:4px;background:rgba(34,197,94,0.780);padding:0 8.5px 0 9.5px;font-size:12px;line-height:20.5px;-webkit-text-stroke:0.45px #14532d;color:#14532d;letter-spacing:0.65px;white-space:nowrap">66.7%</div></div>
<div class="t" style="left:964.90px;width:100px;text-align:right;top:673.14px;font-size:12px;line-height:17px;-webkit-text-stroke:0.33px #111827;color:#111827;letter-spacing:0.82px;">$0</div>
<div class="a" style="left:1094px;top:671px;width:100px;height:20px;display:flex;justify-content:flex-end"><div style="position:relative;height:20px;border-radius:4px;background:rgba(34,197,94,0.450);padding:0 8.5px 0 8.5px;font-size:12px;line-height:20.5px;-webkit-text-stroke:0.45px #14532d;color:#14532d;letter-spacing:0.65px;white-space:nowrap">$46,8<span style="margin-left:-1.1px;letter-spacing:-0.75px">1</span>3</div></div>
<div class="t" style="left:35.80px;width:40px;text-align:right;top:715.14px;font-size:12px;line-height:17px;-webkit-text-stroke:0.33px #111827;color:#111827;letter-spacing:0.4px;">13</div>
<div class="t" style="left:107.60px;top:715.14px;font-size:12px;line-height:17px;color:#111827;letter-spacing:0.42px;text-decoration:underline;text-underline-offset:0.6px;">HondaCivic</div>
<div class="t" style="left:351.00px;width:80px;text-align:right;top:715.14px;font-size:12px;line-height:17px;-webkit-text-stroke:0.33px #111827;color:#111827;letter-spacing:0.55px;">2,677</div>
<div class="t" style="left:498.50px;width:80px;text-align:right;top:715.14px;font-size:12px;line-height:17px;-webkit-text-stroke:0.33px #111827;color:#111827;letter-spacing:0.55px;">28</div>
<div class="a" style="left:611px;top:710px;width:100px;height:6px;border-radius:3px;background:#f3f4f6;overflow:hidden"><div class="a" style="left:0;top:0;width:21.09px;height:6px;border-radius:3px;background:#10b981"></div></div>
<div class="t" style="left:603.50px;width:100px;text-align:right;top:719.54px;font-size:12px;line-height:17px;-webkit-text-stroke:0.33px #08825b;color:#08825b;letter-spacing:0.9px;">$59,594</div>
<div class="a" style="left:727px;top:710px;width:111.5px;height:6px;border-radius:3px;background:#f3f4f6;overflow:hidden"><div class="a" style="left:0;top:0;width:12.71px;height:6px;border-radius:3px;background:#ef4444;"></div></div>
<div class="t" style="left:731.00px;width:100px;text-align:right;top:719.54px;font-size:12px;line-height:17px;-webkit-text-stroke:0.33px #d3262e;color:#d3262e;letter-spacing:0.9px;"><span style="position:relative;top:-0.8px">-</span><span style="margin-left:2.2px">$13,566</span></div>
<div class="a" style="left:868px;top:713px;width:70px;height:20px;display:flex;justify-content:flex-end"><div style="position:relative;height:20px;border-radius:4px;background:rgba(34,197,94,0.934);padding:0 8.5px 0 9.5px;font-size:12px;line-height:20.5px;-webkit-text-stroke:0.45px #14532d;color:#14532d;letter-spacing:0.65px;white-space:nowrap">90.0%</div></div>
<div class="t" style="left:964.90px;width:100px;text-align:right;top:715.14px;font-size:12px;line-height:17px;-webkit-text-stroke:0.33px #111827;color:#111827;letter-spacing:0.82px;">$31,565</div>
<div class="a" style="left:1094px;top:713px;width:100px;height:20px;display:flex;justify-content:flex-end"><div style="position:relative;height:20px;border-radius:4px;background:rgba(34,197,94,0.448);padding:0 8.5px 0 8.5px;font-size:12px;line-height:20.5px;-webkit-text-stroke:0.45px #14532d;color:#14532d;letter-spacing:0.65px;white-space:nowrap">$46,028</div></div>
<div class="t" style="left:35.80px;width:40px;text-align:right;top:757.14px;font-size:12px;line-height:17px;-webkit-text-stroke:0.33px #111827;color:#111827;letter-spacing:0.4px;">14</div>
<div class="t" style="left:107.60px;top:757.14px;font-size:12px;line-height:17px;color:#111827;letter-spacing:0.42px;text-decoration:underline;text-underline-offset:0.6px;">BeefSlayer</div>
<div class="t" style="left:351.00px;width:80px;text-align:right;top:757.14px;font-size:12px;line-height:17px;-webkit-text-stroke:0.33px #111827;color:#111827;letter-spacing:0.55px;">1,129</div>
<div class="t" style="left:498.50px;width:80px;text-align:right;top:757.14px;font-size:12px;line-height:17px;-webkit-text-stroke:0.33px #111827;color:#111827;letter-spacing:0.55px;">11</div>
<div class="a" style="left:611px;top:752px;width:100px;height:6px;border-radius:3px;background:#f3f4f6;overflow:hidden"><div class="a" style="left:0;top:0;width:18.32px;height:6px;border-radius:3px;background:#10b981"></div></div>
<div class="t" style="left:603.50px;width:100px;text-align:right;top:761.54px;font-size:12px;line-height:17px;-webkit-text-stroke:0.33px #08825b;color:#08825b;letter-spacing:0.9px;">$51,769</div>
<div class="a" style="left:727px;top:752px;width:111.5px;height:6px;border-radius:3px;background:#f3f4f6;overflow:hidden"><div class="a" style="left:0;top:0;width:6.65px;height:6px;border-radius:3px;background:#ef4444;"></div></div>
<div class="t" style="left:731.00px;width:100px;text-align:right;top:761.54px;font-size:12px;line-height:17px;-webkit-text-stroke:0.33px #d3262e;color:#d3262e;letter-spacing:0.9px;"><span style="position:relative;top:-0.8px">-</span><span style="margin-left:2.2px">$7,095</span></div>
<div class="a" style="left:868px;top:755px;width:70px;height:20px;display:flex;justify-content:flex-end"><div style="position:relative;height:20px;border-radius:4px;background:rgba(34,197,94,0.778);padding:0 8.5px 0 9.5px;font-size:12px;line-height:20.5px;-webkit-text-stroke:0.45px #14532d;color:#14532d;letter-spacing:0.65px;white-space:nowrap">66.3%</div></div>
<div class="t" style="left:964.90px;width:100px;text-align:right;top:757.14px;font-size:12px;line-height:17px;-webkit-text-stroke:0.33px #111827;color:#111827;letter-spacing:0.82px;">$4,781</div>
<div class="a" style="left:1094px;top:755px;width:100px;height:20px;display:flex;justify-content:flex-end"><div style="position:relative;height:20px;border-radius:4px;background:rgba(34,197,94,0.444);padding:0 8.5px 0 8.5px;font-size:12px;line-height:20.5px;-webkit-text-stroke:0.45px #14532d;color:#14532d;letter-spacing:0.65px;white-space:nowrap">$44,673</div></div>
<div class="t" style="left:35.80px;width:40px;text-align:right;top:799.14px;font-size:12px;line-height:17px;-webkit-text-stroke:0.33px #111827;color:#111827;letter-spacing:0.4px;">15</div>
<div class="t" style="left:107.60px;top:799.14px;font-size:12px;line-height:17px;color:#111827;letter-spacing:0.42px;text-decoration:underline;text-underline-offset:0.6px;">aboss</div>
<div class="t" style="left:351.00px;width:80px;text-align:right;top:799.14px;font-size:12px;line-height:17px;-webkit-text-stroke:0.33px #111827;color:#111827;letter-spacing:0.55px;">2,161</div>
<div class="t" style="left:498.50px;width:80px;text-align:right;top:799.14px;font-size:12px;line-height:17px;-webkit-text-stroke:0.33px #111827;color:#111827;letter-spacing:0.55px;">21</div>
<div class="a" style="left:611px;top:794px;width:100px;height:6px;border-radius:3px;background:#f3f4f6;overflow:hidden"><div class="a" style="left:0;top:0;width:16.62px;height:6px;border-radius:3px;background:#10b981"></div></div>
<div class="t" style="left:603.50px;width:100px;text-align:right;top:803.54px;font-size:12px;line-height:17px;-webkit-text-stroke:0.33px #08825b;color:#08825b;letter-spacing:0.9px;">$46,947</div>
<div class="a" style="left:727px;top:794px;width:111.5px;height:6px;border-radius:3px;background:#f3f4f6;overflow:hidden"><div class="a" style="left:0;top:0;width:7.65px;height:6px;border-radius:3px;background:#ef4444;"></div></div>
<div class="t" style="left:731.00px;width:100px;text-align:right;top:803.54px;font-size:12px;line-height:17px;-webkit-text-stroke:0.33px #d3262e;color:#d3262e;letter-spacing:0.9px;"><span style="position:relative;top:-0.8px">-</span><span style="margin-left:2.2px">$8,169</span></div>
<div class="a" style="left:868px;top:797px;width:70px;height:20px;display:flex;justify-content:flex-end"><div style="position:relative;height:20px;border-radius:4px;background:rgba(34,197,94,0.782);padding:0 8.5px 0 9.5px;font-size:12px;line-height:20.5px;-webkit-text-stroke:0.45px #14532d;color:#14532d;letter-spacing:0.65px;white-space:nowrap">67.0%</div></div>
<div class="t" style="left:964.90px;width:100px;text-align:right;top:799.14px;font-size:12px;line-height:17px;-webkit-text-stroke:0.33px #111827;color:#111827;letter-spacing:0.82px;">$3,818</div>
<div class="a" style="left:1094px;top:797px;width:100px;height:20px;display:flex;justify-content:flex-end"><div style="position:relative;height:20px;border-radius:4px;background:rgba(34,197,94,0.426);padding:0 8.5px 0 8.5px;font-size:12px;line-height:20.5px;-webkit-text-stroke:0.45px #14532d;color:#14532d;letter-spacing:0.65px;white-space:nowrap">$38,778</div></div>
</body></html>
